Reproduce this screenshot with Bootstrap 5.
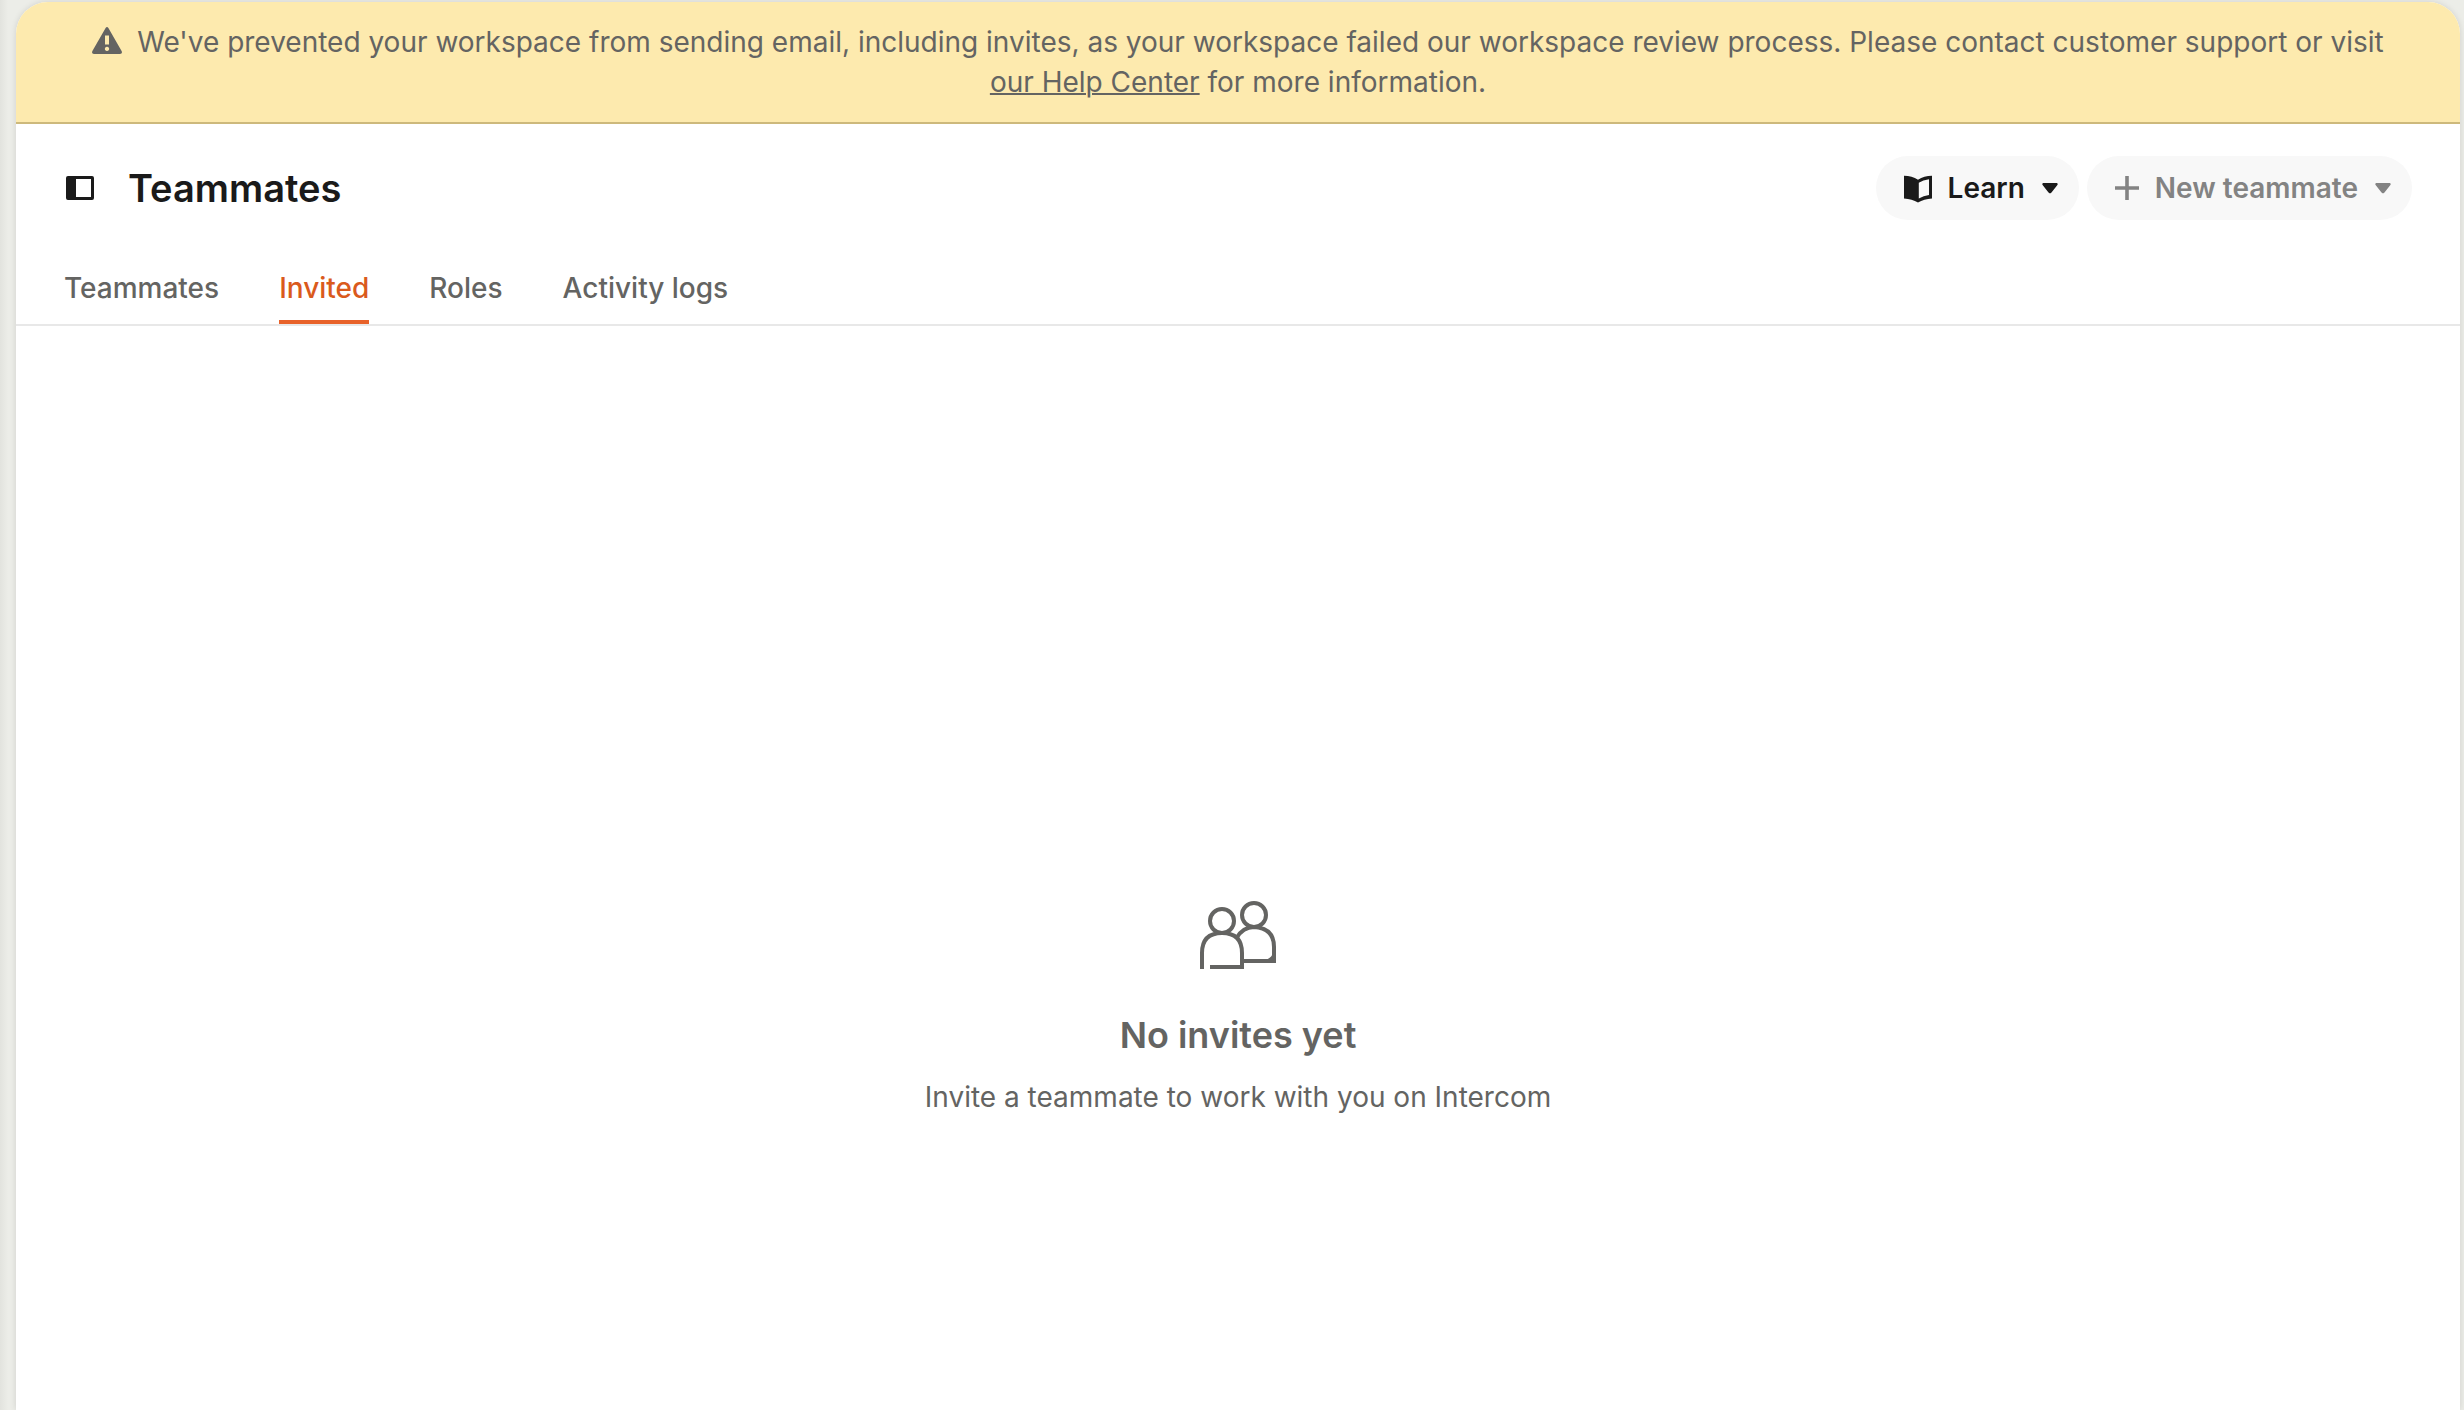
<!DOCTYPE html>
<html lang="en">
<head>
<meta charset="utf-8">
<meta name="viewport" content="width=device-width, initial-scale=1">
<title>Teammates</title>
<link href="https://cdn.jsdelivr.net/npm/bootstrap@5.3.0/dist/css/bootstrap.min.css" rel="stylesheet">
<style>
  body { font-family: Inter, "Liberation Sans", sans-serif; font-size: 28px; line-height: 40px; color: #646462; background: linear-gradient(to right, #e2e3de, #ecede8 8px); }
  .app-shell { padding: 2px 4px 0 16px; }
  .panel { background: #fff; border-radius: 32px 32px 0 0; box-shadow: 0 0 6px rgba(0, 0, 0, .12); overflow: hidden; }
  .notice { background: #fdeaae; border-bottom: 2px solid #cdb97c; padding: 20px 64px; }
  .notice svg { margin-right: 15px; vertical-align: -2px; }
  .notice a { color: inherit; text-decoration-thickness: 2px; }
  .page-head { padding: 32px 48px 28px; }
  .page-head h1 { font-size: 38px; line-height: 48px; color: #1a1a1a; }
  .side-toggle { padding: 4px 2px; line-height: 1; margin-right: 32px; }
  .pill { --bs-btn-font-size: 28px; --bs-btn-line-height: 40px; --bs-btn-font-weight: 600; --bs-btn-bg: #f8f8f8; --bs-btn-color: #1a1a1a; --bs-btn-hover-bg: #efefef; --bs-btn-border-width: 0; --bs-btn-disabled-bg: #f8f8f8; --bs-btn-disabled-color: #838383; --bs-btn-disabled-opacity: 1; --bs-btn-border-radius: 32px; padding: 12px 21px 12px 28px; }
  .pill svg { overflow: visible; }
  .caret { margin-left: 17px; }
  .tabs { gap: 60px; padding: 0 48px; border-bottom: 2px solid #e8e8e8; }
  .tabs .nav-link { padding: 20px 0 12px; color: inherit; font-weight: 500; border-bottom: 4px solid transparent; }
  .tabs .nav-link.active { color: #da5a1c; border-color: #e8622a; }
  .empty { padding: 575px 32px 240px; }
  .empty h2 { font-size: 36px; line-height: 44px; margin: 44px 0 20px; }
</style>
</head>
<body>
<div class="app-shell d-flex min-vh-100">
  <main class="panel flex-grow-1">
    <div class="notice text-center" role="alert"><svg width="30" height="27" viewBox="0 0 30 27" aria-hidden="true"><path fill="#646462" fill-rule="evenodd" d="M13.6 1Q15-1 16.4 1L29.6 24Q30.8 26.8 28 27H2Q-.8 26.8.4 24ZM13 8.500V17.500H17V8.500ZM15 19.800a2.100 2.100 0 1 0 .01 0Z"/></svg>We've prevented your workspace from sending email, including invites, as your workspace failed our workspace review process. Please contact customer support or visit <a href="#">our Help Center</a> for more information.</div>

    <header class="page-head d-flex align-items-center">
      <button type="button" class="side-toggle btn border-0 d-flex" aria-label="Toggle sidebar">
        <svg width="28" height="24" viewBox="0 0 28 24"><path fill="#1a1a1a" fill-rule="evenodd" d="M2 0H26Q28 0 28 2V22Q28 24 26 24H2Q0 24 0 22V2Q0 0 2 0ZM10 3V21H25V3Z"/></svg>
      </button>
      <h1 class="fw-semibold mb-0">Teammates</h1>
      <div class="d-flex gap-2 ms-auto">
        <button type="button" class="btn pill d-flex align-items-center">
          <svg width="28" height="28" viewBox="0 -1 28 28" class="me-3" aria-hidden="true"><path fill="#1a1a1a" fill-rule="evenodd" d="M0 .8Q8 1 14 4.800Q20 1 28 .8V23.400Q20 24 14 27.600Q8 24 0 23.400ZM14.800 7.700V23.400Q19.500 20.700 25 20V4.200Q19 5 14.800 7.700Z"/></svg>
          Learn
          <svg class="caret" width="16" height="11" viewBox="0 0 16 11" aria-hidden="true"><path fill="currentColor" d="M1 0H15Q16.400.8 15.400 2L9.500 9.600Q8 11.200 6.500 9.600L.6 2Q-.4.8 1 0Z"/></svg>
        </button>
        <button type="button" class="btn pill d-flex align-items-center" disabled>
          <svg width="24" height="24" viewBox="0 0 24 24" class="me-3" aria-hidden="true"><path stroke="currentColor" stroke-width="3.600" d="M12 0V24M0 12H24"/></svg>
          New teammate
          <svg class="caret" width="16" height="11" viewBox="0 0 16 11" aria-hidden="true"><path fill="currentColor" d="M1 0H15Q16.400.8 15.400 2L9.500 9.600Q8 11.200 6.500 9.600L.6 2Q-.4.8 1 0Z"/></svg>
        </button>
      </div>
    </header>

    <nav class="nav tabs" aria-label="Teammate sections">
      <a class="nav-link" href="#">Teammates</a>
      <a class="nav-link active" aria-current="page" href="#">Invited</a>
      <a class="nav-link" href="#">Roles</a>
      <a class="nav-link" href="#">Activity logs</a>
    </nav>

    <section class="empty text-center">
      <svg class="d-block mx-auto" width="76" height="68" viewBox="0 0 76 68" aria-hidden="true">
        <g fill="none" stroke="#646462" stroke-width="4">
          <circle cx="22" cy="20" r="12"/><circle cx="54" cy="14" r="12"/>
          <path d="M2 68V52Q2 32 22 32T42 52V66H10"/>
          <path d="M36.500 37Q43 26 54 26Q74 27 74 46V60H43"/>
        </g>
        <path fill="#646462" d="M73 50Q73 57 65 59V62H74Q76 62 76 60V50Z"/>
      </svg>
      <h2 class="fw-semibold">No invites yet</h2>
      <p class="mb-0">Invite a teammate to work with you on Intercom</p>
    </section>
  </main>
</div>
<script src="https://cdn.jsdelivr.net/npm/bootstrap@5.3.0/dist/js/bootstrap.bundle.min.js"></script>
</body>
</html>
